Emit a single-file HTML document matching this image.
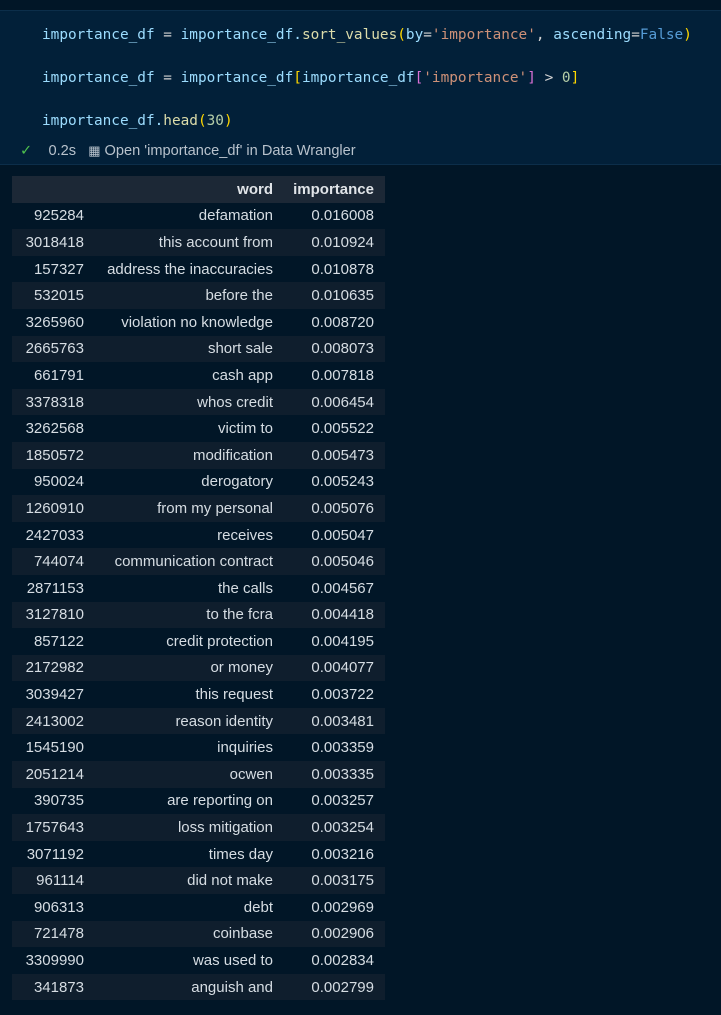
<!DOCTYPE html>
<html><head><style>
body{margin:0;background:#011627;width:721px;height:1015px;overflow:hidden;font-family:"Liberation Sans",sans-serif}
.cell{position:absolute;left:0;top:10px;width:721px;height:153px;background:#022039;border-top:1px solid #0c2e4a;border-bottom:1px solid #0c2e4a}
.code{position:absolute;left:42px;font-family:"DejaVu Sans Mono","Liberation Mono",monospace;font-size:14.4px;color:#9cdcfe;white-space:pre}
.f{color:#dcdcaa}.s{color:#ce9178}.k{color:#569cd6}.y{color:#ffd700}.p{color:#da70d6}.n{color:#b5cea8}.w{color:#d4d4d4}
.status{position:absolute;left:20px;top:131px;font-size:14.6px;color:#b8c2cc;white-space:pre}
table{position:absolute;left:12px;top:176px;border-collapse:collapse;table-layout:fixed;width:373px;font-size:15px;color:#d6dde3}
td,th{height:26.6px;padding:0;text-align:right;white-space:nowrap}
th{background:#1c2836;font-weight:bold;color:#e0e4e8}
tr:nth-child(odd) td{background:#0f1e2d}
td:last-child,th:last-child{padding-right:11px}
</style></head><body>
<div class="cell">
<div class="code" style="top:16px">importance_df <span class="w">=</span> importance_df.<span class="f">sort_values</span><span class="y">(</span>by<span class="w">=</span><span class="s">'importance'</span><span class="w">,</span> ascending<span class="w">=</span><span class="k">False</span><span class="y">)</span></div>
<div class="code" style="top:59px">importance_df <span class="w">=</span> importance_df<span class="y">[</span>importance_df<span class="p">[</span><span class="s">'importance'</span><span class="p">]</span> <span class="w">&gt;</span> <span class="n">0</span><span class="y">]</span></div>
<div class="code" style="top:102px">importance_df.<span class="f">head</span><span class="y">(</span><span class="n">30</span><span class="y">)</span></div>
<div class="status"><span style="color:#4ec04e">✓</span>    0.2s   <span style="font-size:13px">▦</span> Open 'importance_df' in Data Wrangler</div>
</div>
<table>
<colgroup><col style="width:72px"><col style="width:189px"><col style="width:112px"></colgroup>
<tr><th></th><th>word</th><th>importance</th></tr>
<tr><td>925284</td><td>defamation</td><td>0.016008</td></tr>
<tr><td>3018418</td><td>this account from</td><td>0.010924</td></tr>
<tr><td>157327</td><td>address the inaccuracies</td><td>0.010878</td></tr>
<tr><td>532015</td><td>before the</td><td>0.010635</td></tr>
<tr><td>3265960</td><td>violation no knowledge</td><td>0.008720</td></tr>
<tr><td>2665763</td><td>short sale</td><td>0.008073</td></tr>
<tr><td>661791</td><td>cash app</td><td>0.007818</td></tr>
<tr><td>3378318</td><td>whos credit</td><td>0.006454</td></tr>
<tr><td>3262568</td><td>victim to</td><td>0.005522</td></tr>
<tr><td>1850572</td><td>modification</td><td>0.005473</td></tr>
<tr><td>950024</td><td>derogatory</td><td>0.005243</td></tr>
<tr><td>1260910</td><td>from my personal</td><td>0.005076</td></tr>
<tr><td>2427033</td><td>receives</td><td>0.005047</td></tr>
<tr><td>744074</td><td>communication contract</td><td>0.005046</td></tr>
<tr><td>2871153</td><td>the calls</td><td>0.004567</td></tr>
<tr><td>3127810</td><td>to the fcra</td><td>0.004418</td></tr>
<tr><td>857122</td><td>credit protection</td><td>0.004195</td></tr>
<tr><td>2172982</td><td>or money</td><td>0.004077</td></tr>
<tr><td>3039427</td><td>this request</td><td>0.003722</td></tr>
<tr><td>2413002</td><td>reason identity</td><td>0.003481</td></tr>
<tr><td>1545190</td><td>inquiries</td><td>0.003359</td></tr>
<tr><td>2051214</td><td>ocwen</td><td>0.003335</td></tr>
<tr><td>390735</td><td>are reporting on</td><td>0.003257</td></tr>
<tr><td>1757643</td><td>loss mitigation</td><td>0.003254</td></tr>
<tr><td>3071192</td><td>times day</td><td>0.003216</td></tr>
<tr><td>961114</td><td>did not make</td><td>0.003175</td></tr>
<tr><td>906313</td><td>debt</td><td>0.002969</td></tr>
<tr><td>721478</td><td>coinbase</td><td>0.002906</td></tr>
<tr><td>3309990</td><td>was used to</td><td>0.002834</td></tr>
<tr><td>341873</td><td>anguish and</td><td>0.002799</td></tr>
</table>
</body></html>
